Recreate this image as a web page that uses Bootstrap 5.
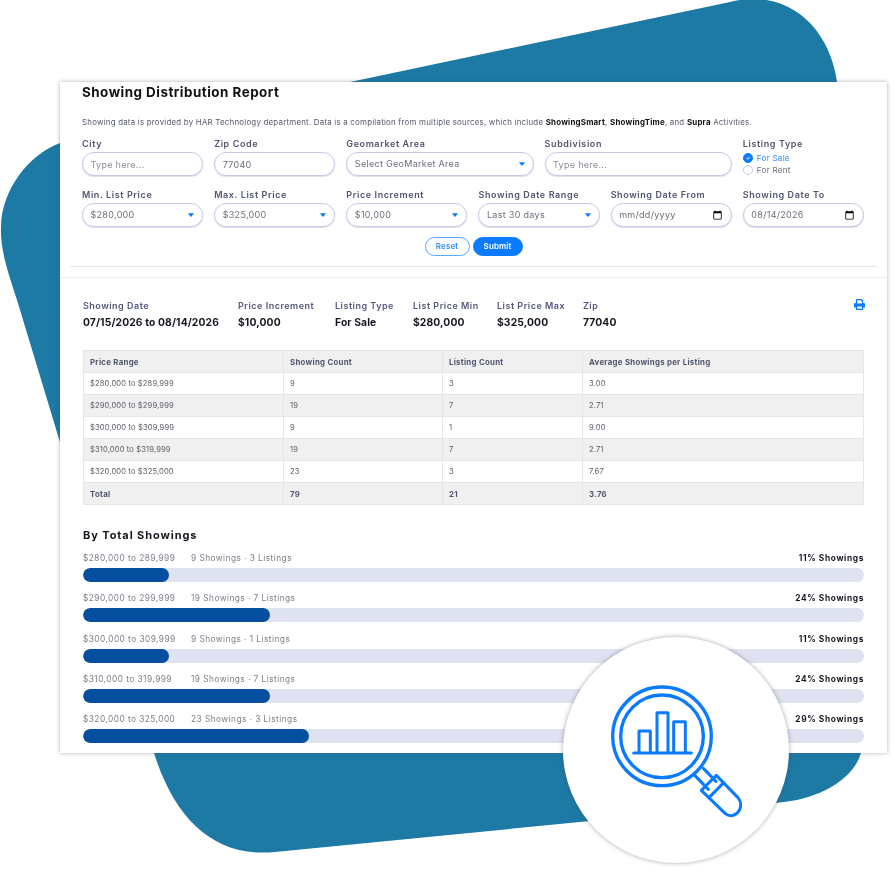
<!DOCTYPE html>
<html lang="en"><head><meta charset="utf-8"><title>Showing Distribution Report</title>
<link href="https://cdn.jsdelivr.net/npm/bootstrap@5.3.0/dist/css/bootstrap.min.css" rel="stylesheet">
<style>
html,body{background:#fff;margin:0;height:872px;overflow:hidden}
body{font-family:Inter,"Liberation Sans",sans-serif;position:relative;padding:82px 7px 0 60px;color:#4b4f63}
.blob-bg{position:absolute;left:0;top:0;z-index:0}
.report-panel{position:relative;z-index:1;width:827px;height:671px;background:#fff;box-shadow:0 0 4px rgba(70,75,100,.45);overflow:hidden}
.panel-soft{filter:blur(.3px)}
.filter-area{padding:0 22px 0 22px}
.report-title{font-size:13.4px;font-weight:700;color:#111;margin:2px 0 0;line-height:16px;letter-spacing:.5px}
.report-desc{font-size:7.9px;line-height:10px;color:#555a6a;margin:17px 0 0;letter-spacing:.22px}
.report-desc b{color:#111;font-weight:700}
.filter-row{--bs-gutter-x:11px;margin-left:-5.5px;margin-right:-5.5px;width:793px}
.field-label{display:block;font-size:9px;line-height:11px;font-weight:600;color:#4f5470;margin:0 0 3px;letter-spacing:.6px;white-space:nowrap}
.pill-input.form-control,.pill-input.form-select{height:24px;min-height:0;border-radius:12px;border:1px solid #c5cae6;font-size:9px;line-height:12px;padding:0 7.5px;color:#6b6f7c;box-shadow:0 1px 1px rgba(120,125,170,.25);letter-spacing:.3px}
.pill-input::placeholder{color:#8a8d98}
.pill-input.form-select{background-size:6px 4px;background-position:right 8px center;background-image:url("data:image/svg+xml,%3csvg xmlns='http://www.w3.org/2000/svg' viewBox='0 0 9 5'%3e%3cpath fill='%230a7bff' d='M0 0h9L5 5H4z'/%3e%3c/svg%3e")}
.pill-input[type=date]::-webkit-calendar-picker-indicator{width:11px;height:11px;margin:0;padding:0}
.pill-input[type=date]{padding-right:8px}
.radio-stack{font-size:8.2px;line-height:12px;letter-spacing:.2px;margin-top:1px}
.radio-line{display:flex;align-items:center;gap:4px;height:12px;color:#6b6f7c}
.radio-line.is-on{color:#2f8cff}
.radio-line .form-check-input{width:10px;height:10px;margin:0;border-color:#c5cae6}
.radio-line .form-check-input:checked{background-color:#0a7bff;border-color:#0a7bff;background-image:url("data:image/svg+xml,%3csvg xmlns='http://www.w3.org/2000/svg' viewBox='0 0 10 10'%3e%3cpath fill='none' stroke='%23fff' stroke-width='1.2' d='M3 5l1.5 1.5L7 3.5'/%3e%3c/svg%3e")}
.row-gap-first{margin-top:11px}
.row-gap-second{margin-top:13px}
.action-row{margin-top:10px;gap:3px}
.btn-reset,.btn-send{height:19px;border-radius:10px;font-size:8px;font-weight:600;padding:0;line-height:17px;letter-spacing:.1px}
.btn-reset{width:45px;border:1px solid #5aa5ff;color:#2f8cff;background:#fff}
.btn-send{width:50px;border:1px solid #0a7bff;background:#0a7bff;color:#fff}
.rule-inner{height:1px;background:#e4e5ea;margin:10px 10px 0}
.rule-outer{height:1px;background:#eceef2;margin-top:10px}
.summary-wrap{padding:22px 22px 0 23px;position:relative}
.summary-item .sum-key{font-size:9px;line-height:11px;font-weight:600;color:#54597a;letter-spacing:.5px;white-space:nowrap}
.summary-item .sum-val{font-size:10.3px;line-height:12px;font-weight:700;color:#14161f;margin-top:5px;letter-spacing:.13px;white-space:nowrap}
.print-mark{position:absolute;right:22px;top:21px;width:11px;height:11px}
.data-grid{width:780px;margin:22px 0 0 23px;table-layout:fixed;font-size:7.6px;letter-spacing:.12px;color:#5a5d66;border-collapse:collapse}
.data-grid th,.data-grid td{height:22px;padding:0 6px;border:1px solid #e6e6e9;vertical-align:middle;font-weight:400;line-height:10px}
.data-grid th,.data-grid .row-total td{font-weight:700;color:#50556e;background:#f0f0f1;font-size:7.8px;letter-spacing:.3px}
.data-grid .row-alt td{background:#f0f0f1}
.bars-wrap{padding:23px 23px 0 23px}
.bars-title{font-size:11px;line-height:14px;font-weight:700;color:#14161f;margin:0 0 11px;letter-spacing:.92px}
.bar-entry{margin-bottom:11.3px}
.bar-head{font-size:8.3px;line-height:10px;color:#7a7e88;margin-bottom:5px;letter-spacing:.46px}
.bar-head .bar-range{display:inline-block;width:108px}
.bar-head .bar-share{color:#14161f;font-weight:700;letter-spacing:.65px}
.bar-track{height:14px;background:#dfe2f0;border-radius:7px;overflow:hidden}
.bar-track .bar-fill{height:14px;background:#054f9e;border-radius:7px}
.lens-badge{position:absolute;z-index:2;left:563px;top:637px;width:226px;height:226px;border-radius:50%;background:#fff;box-shadow:0 0 4px rgba(70,75,100,.5)}
</style></head><body>
<svg class="blob-bg" width="894" height="872" viewBox="0 0 894 872"><path fill="#1c7aa5" d="M60 143 L730 2 C790 -13 833 30 838 90 L862 745 C862 770 830 797 784 802 L275 852 C215 858 175 820 154 753 L17 300 C8 272 0 250 1 226 C2 190 28 155 60 143Z"/></svg>
<div class="report-panel">
 <div class="panel-soft">
  <div class="filter-area">
    <h1 class="report-title">Showing Distribution Report</h1>
    <p class="report-desc">Showing data is provided by HAR Technology department. Data is a compilation from multiple sources, which include <b>ShowingSmart</b>, <b>ShowingTime</b>, and <b>Supra</b> Activities.</p>
    <div class="row filter-row row-gap-first">
      <div class="col-2"><label class="field-label">City</label><input class="form-control pill-input" placeholder="Type here..."></div>
      <div class="col-2"><label class="field-label">Zip Code</label><input class="form-control pill-input" value="77040"></div>
      <div class="col-3"><label class="field-label">Geomarket Area</label><select class="form-select pill-input"><option>Select GeoMarket Area</option></select></div>
      <div class="col-3"><label class="field-label">Subdivision</label><input class="form-control pill-input" placeholder="Type here..."></div>
      <div class="col-2"><label class="field-label">Listing Type</label>
        <div class="radio-stack">
          <div class="radio-line is-on"><input class="form-check-input" type="radio" name="lt" checked><span>For Sale</span></div>
          <div class="radio-line"><input class="form-check-input" type="radio" name="lt"><span>For Rent</span></div>
        </div>
      </div>
    </div>
    <div class="row filter-row row-gap-second">
      <div class="col-2"><label class="field-label">Min. List Price</label><select class="form-select pill-input"><option>$280,000</option></select></div>
      <div class="col-2"><label class="field-label">Max. List Price</label><select class="form-select pill-input"><option>$325,000</option></select></div>
      <div class="col-2"><label class="field-label">Price Increment</label><select class="form-select pill-input"><option>$10,000</option></select></div>
      <div class="col-2"><label class="field-label">Showing Date Range</label><select class="form-select pill-input"><option>Last 30 days</option></select></div>
      <div class="col-2"><label class="field-label">Showing Date From</label><input type="date" class="form-control pill-input"></div>
      <div class="col-2"><label class="field-label">Showing Date To</label><input type="date" class="form-control pill-input" value="2026-08-14"></div>
    </div>
    <div class="d-flex justify-content-center action-row">
      <button class="btn btn-reset">Reset</button><button class="btn btn-send">Submit</button>
    </div>
  </div>
  <div class="rule-inner"></div>
  <div class="rule-outer"></div>
  <div class="summary-wrap d-flex">
    <div class="summary-item" style="width:155px"><div class="sum-key">Showing Date</div><div class="sum-val">07/15/2026 to 08/14/2026</div></div>
    <div class="summary-item" style="width:97px"><div class="sum-key">Price Increment</div><div class="sum-val">$10,000</div></div>
    <div class="summary-item" style="width:78px"><div class="sum-key">Listing Type</div><div class="sum-val">For Sale</div></div>
    <div class="summary-item" style="width:84px"><div class="sum-key">List Price Min</div><div class="sum-val">$280,000</div></div>
    <div class="summary-item" style="width:86px"><div class="sum-key">List Price Max</div><div class="sum-val">$325,000</div></div>
    <div class="summary-item"><div class="sum-key">Zip</div><div class="sum-val">77040</div></div>
    <svg class="print-mark" viewBox="0 0 11 11"><path fill="#0a7bff" fill-rule="evenodd" d="M3 0h4.500L9 1.500V4h1a1 1 0 0 1 1 1v3.500H9V11H2V8.500H0V5a1 1 0 0 1 1-1h1V1a1 1 0 0 1 1-1zM3.200 1.200V4.500h4.600V2H7V1.200zM3.200 7.500V9.800h4.600V7.500z"/></svg>
  </div>
  <table class="data-grid">
    <colgroup><col style="width:200px"><col style="width:159px"><col style="width:140px"><col style="width:281px"></colgroup>
    <tr><th>Price Range</th><th>Showing Count</th><th>Listing Count</th><th>Average Showings per Listing</th></tr>
    <tr><td>$280,000 to $289,999</td><td>9</td><td>3</td><td>3.00</td></tr>
    <tr class="row-alt"><td>$290,000 to $299,999</td><td>19</td><td>7</td><td>2.71</td></tr>
    <tr><td>$300,000 to $309,999</td><td>9</td><td>1</td><td>9.00</td></tr>
    <tr class="row-alt"><td>$310,000 to $319,999</td><td>19</td><td>7</td><td>2.71</td></tr>
    <tr><td>$320,000 to $325,000</td><td>23</td><td>3</td><td>7.67</td></tr>
    <tr class="row-total"><td>Total</td><td>79</td><td>21</td><td>3.76</td></tr>
  </table>
  <div class="bars-wrap">
    <h2 class="bars-title">By Total Showings</h2>
    <div class="bar-entry"><div class="bar-head d-flex justify-content-between"><span><span class="bar-range">$280,000 to 289,999</span>9 Showings · 3 Listings</span><span class="bar-share">11% Showings</span></div><div class="bar-track"><div class="bar-fill" style="width:11%"></div></div></div>
    <div class="bar-entry"><div class="bar-head d-flex justify-content-between"><span><span class="bar-range">$290,000 to 299,999</span>19 Showings · 7 Listings</span><span class="bar-share">24% Showings</span></div><div class="bar-track"><div class="bar-fill" style="width:24%"></div></div></div>
    <div class="bar-entry"><div class="bar-head d-flex justify-content-between"><span><span class="bar-range">$300,000 to 309,999</span>9 Showings · 1 Listings</span><span class="bar-share">11% Showings</span></div><div class="bar-track"><div class="bar-fill" style="width:11%"></div></div></div>
    <div class="bar-entry"><div class="bar-head d-flex justify-content-between"><span><span class="bar-range">$310,000 to 319,999</span>19 Showings · 7 Listings</span><span class="bar-share">24% Showings</span></div><div class="bar-track"><div class="bar-fill" style="width:24%"></div></div></div>
    <div class="bar-entry"><div class="bar-head d-flex justify-content-between"><span><span class="bar-range">$320,000 to 325,000</span>23 Showings · 3 Listings</span><span class="bar-share">29% Showings</span></div><div class="bar-track"><div class="bar-fill" style="width:29%"></div></div></div>
  </div>
 </div>
</div>
<div class="lens-badge">
  <svg width="226" height="226" viewBox="38 50 678 678" fill="none" stroke="#0a7bff">
    <circle cx="335" cy="348" r="148" stroke-width="10"/>
    <circle cx="335" cy="348" r="124" stroke-width="10"/>
    <g stroke-width="9" stroke-linejoin="round" stroke-linecap="round">
      <path d="M266 396V332H300V396M320 396V277H353V396M370 396V304H405V396"/>
      <path d="M250 398H423"/>
      <path d="M434 466L474 507M459 444L497 483"/>
      <path d="M498 465L453 510L525 580C540 592 560 585 568 568C574 555 570 540 562 531Z"/>
      <path d="M520 487L476 532"/>
    </g>
  </svg>
</div>
<script src="https://cdn.jsdelivr.net/npm/bootstrap@5.3.0/dist/js/bootstrap.bundle.min.js"></script>
</body></html>
